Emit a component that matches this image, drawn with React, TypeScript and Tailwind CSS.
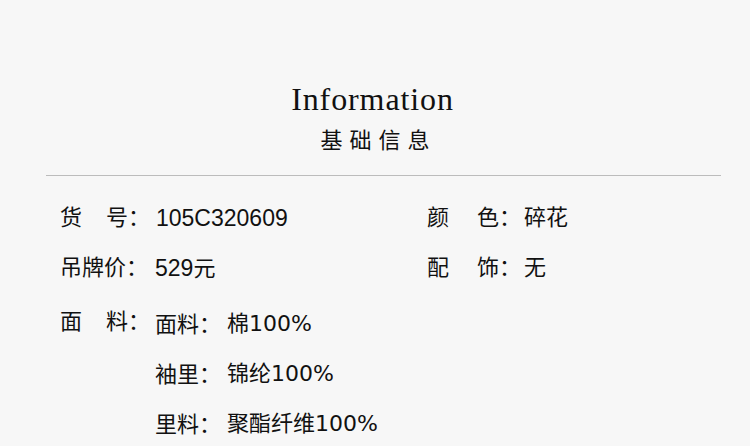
const cjk = "font-['Liberation_Sans','Noto_Sans_CJK_SC',sans-serif]"
const cjkOnly = "font-['Noto_Sans_CJK_SC',sans-serif]"
const dejavu = "font-['DejaVu_Sans','Noto_Sans_CJK_SC',sans-serif]"

function Label({ first, last, gap }: { first: string; last?: string; gap?: string }) {
  return (
    <span className="flex w-[95px] shrink-0">
      <span>{first}</span>
      {last && <span className={gap}>{last}</span>}
      <span className="w-[22px]">：</span>
    </span>
  )
}

const materials = [
  { k: '面料', v: '棉', n: '100%' },
  { k: '袖里', v: '锦纶', n: '100%' },
  { k: '里料', v: '聚酯纤维', n: '100%' },
]

export default function App() {
  return (
    <div className={`min-h-[446px] w-[750px] overflow-hidden bg-[#f7f7f7] text-[#111] ${cjk}`}>
      {/* heading */}
      <div className="flex flex-col items-center pt-[83px]">
        <h1 className="font-['Liberation_Serif',serif] text-[32px] leading-none tracking-[0.9px] -ml-[5px]">
          Information
        </h1>
        <p className={`mt-[12px] text-[22px] leading-none tracking-[7px] pl-[7px] ${cjkOnly}`}>基础信息</p>
      </div>

      <div className="mt-[26px] ml-[46px] w-[675px] border-t border-[#bcbcbc] pt-[17px] pl-[14px] text-[22px] leading-none">
        <div className="flex h-[50px] items-center">
          <div className="flex w-[367px] items-center">
            <Label first="货" last="号" gap="ml-[24px]" />
            <span className="ml-[1px] text-[23px]">105C320609</span>
          </div>
          <div className="flex">
            <Label first="颜" last="色" gap="ml-[28px]" />
            <span className="ml-[2px]">碎花</span>
          </div>
        </div>
        <div className="flex h-[50px] items-center">
          <div className="flex w-[367px] items-center">
            <span className="flex w-[95px] shrink-0">
              <span>吊牌价</span>
              <span>：</span>
            </span>
            <span className="text-[23px]">529<span className="text-[22px]">元</span></span>
          </div>
          <div className="flex">
            <Label first="配" last="饰" gap="ml-[28px]" />
            <span className="ml-[2px]">无</span>
          </div>
        </div>

        <div className="mt-[4px] flex">
          <div className="flex h-[50px] items-center self-start">
            <Label first="面" last="料" gap="ml-[24px]" />
          </div>
          <div className={`flex flex-col ${cjkOnly}`}>
            {materials.map(m => (
              <div key={m.k} className="flex h-[50px] items-center">
                <span className="w-[72px]">{m.k}：</span>
                <span>
                  {m.v}
                  <span className={dejavu}>{m.n}</span>
                </span>
              </div>
            ))}
          </div>
        </div>
      </div>
    </div>
  )
}
